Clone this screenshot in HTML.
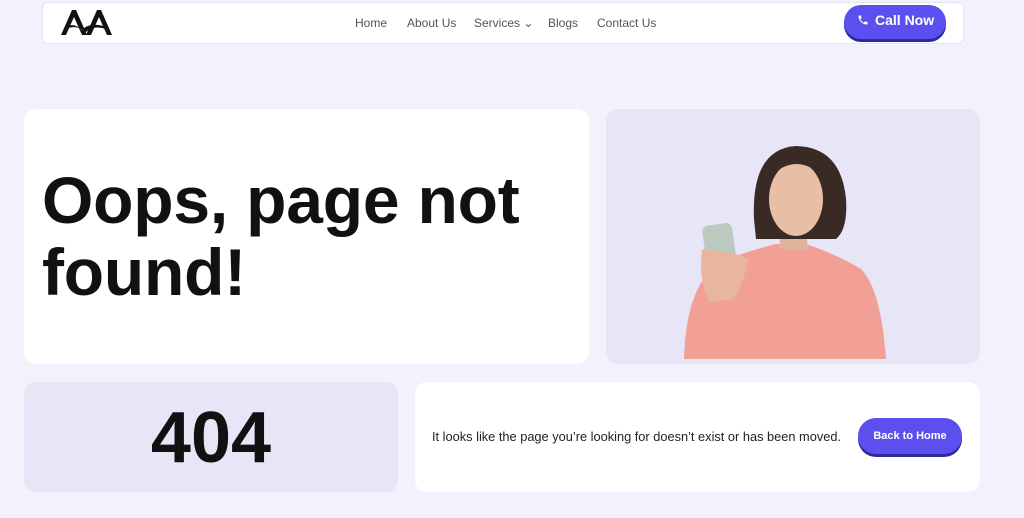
<!DOCTYPE html>
<html><head><style>
*{margin:0;padding:0;box-sizing:border-box}
body{width:1024px;height:518px;background:#f2f2fc;font-family:"Liberation Sans",sans-serif;position:relative;overflow:hidden;color:#111}
.nav{position:absolute;left:42px;top:2px;width:922px;height:42px;background:#fff;border:1px solid #e4e4ef;border-radius:6px}
.nav a{position:absolute;top:13px;font-size:12px;color:#555;text-decoration:none}
.call{position:absolute;left:844px;top:5px;width:102px;height:34px;background:#5b4ff0;border-radius:18px;box-shadow:0 3px 0 #2f2a9a;color:#fff;font-size:14px;font-weight:bold;line-height:30px;padding-left:31px}
.card{position:absolute;background:#fff;border-radius:12px}
.h{position:absolute;left:42px;top:164px;font-size:66px;font-weight:bold;line-height:72px;letter-spacing:-0.2px;color:#111}
.btn{position:absolute;left:858px;top:418px;width:104px;height:36px;background:#5b4ff0;border-radius:18px;box-shadow:0 3px 0 #2f2a9a;color:#fff;font-size:11px;font-weight:bold;text-align:center;line-height:36px}
</style></head><body>
<div class="nav">
<svg style="position:absolute;left:17px;top:5px" width="52" height="28" viewBox="0 0 52 28"><path d="M1 27 L12 2 L16 2 L27 27 L22 27 L14 9 L6 27Z M26 27 L37 2 L41 2 L52 27 L47 27 L39 9 L31 27Z M5 19 Q14 14 22 22 L24 20 Q32 14 47 19 L46 21 Q33 17 26 24 Q16 16 6 21Z" fill="#111"/></svg>
<a style="left:312px">Home</a><a style="left:364px">About Us</a><a style="left:431px">Services ⌄</a><a style="left:505px">Blogs</a><a style="left:554px">Contact Us</a>
</div>
<div class="call"><svg style="position:absolute;left:13px;top:9px" width="12" height="12" viewBox="0 0 24 24"><path d="M6.6 10.8c1.4 2.8 3.8 5.1 6.6 6.6l2.2-2.2c.3-.3.7-.4 1-.2 1.1.4 2.3.6 3.6.6.6 0 1 .4 1 1V20c0 .6-.4 1-1 1C10.6 21 3 13.4 3 4c0-.6.4-1 1-1h3.5c.6 0 1 .4 1 1 0 1.3.2 2.5.6 3.6.1.3 0 .7-.2 1z" fill="#fff"/></svg>Call Now</div>
<div class="card" style="left:24px;top:109px;width:565px;height:255px"></div>
<div class="h">Oops, page not<br>found!</div>
<div class="card" style="left:606px;top:109px;width:374px;height:255px;background:#e6e6f6;overflow:hidden">
<svg width="374" height="255" viewBox="0 0 374 255">
<path d="M78 250 Q80 170 120 150 Q150 140 170 135 L200 135 Q230 145 255 160 Q275 180 280 250Z" fill="#f2a095"/>
<path d="M175 120 L200 120 L202 140 L173 140Z" fill="#e0b49c"/>
<path d="M148 110 Q145 40 190 37 Q235 38 240 90 Q242 120 230 130 L150 130Z" fill="#3a2a26"/>
<ellipse cx="190" cy="90" rx="27" ry="37" fill="#e8bfa6"/>
<path d="M162 70 Q190 40 220 70 L220 55 Q190 35 160 55Z" fill="#3a2a26"/>
<rect x="100" y="115" width="30" height="67" rx="6" fill="#bcc9be" transform="rotate(-8 115 148)"/>
<path d="M96 140 Q92 175 105 195 L125 195 Q140 170 142 150 L130 145 Z" fill="#e8b59d"/>
<path d="M80 250 L90 195 L130 190 L140 250Z" fill="#f2a095"/>
</svg></div>
<div class="card" style="left:24px;top:382px;width:374px;height:110px;background:#e6e6f6"></div>
<div style="position:absolute;left:24px;top:398px;width:374px;text-align:center;font-size:72px;font-weight:bold;line-height:80px;color:#111">404</div>
<div class="card" style="left:415px;top:382px;width:565px;height:110px"></div>
<div style="position:absolute;left:432px;top:429px;font-size:12.8px;color:#222">It looks like the page you’re looking for doesn’t exist or has been moved.</div>
<div class="btn">Back to Home</div>
</body></html>
